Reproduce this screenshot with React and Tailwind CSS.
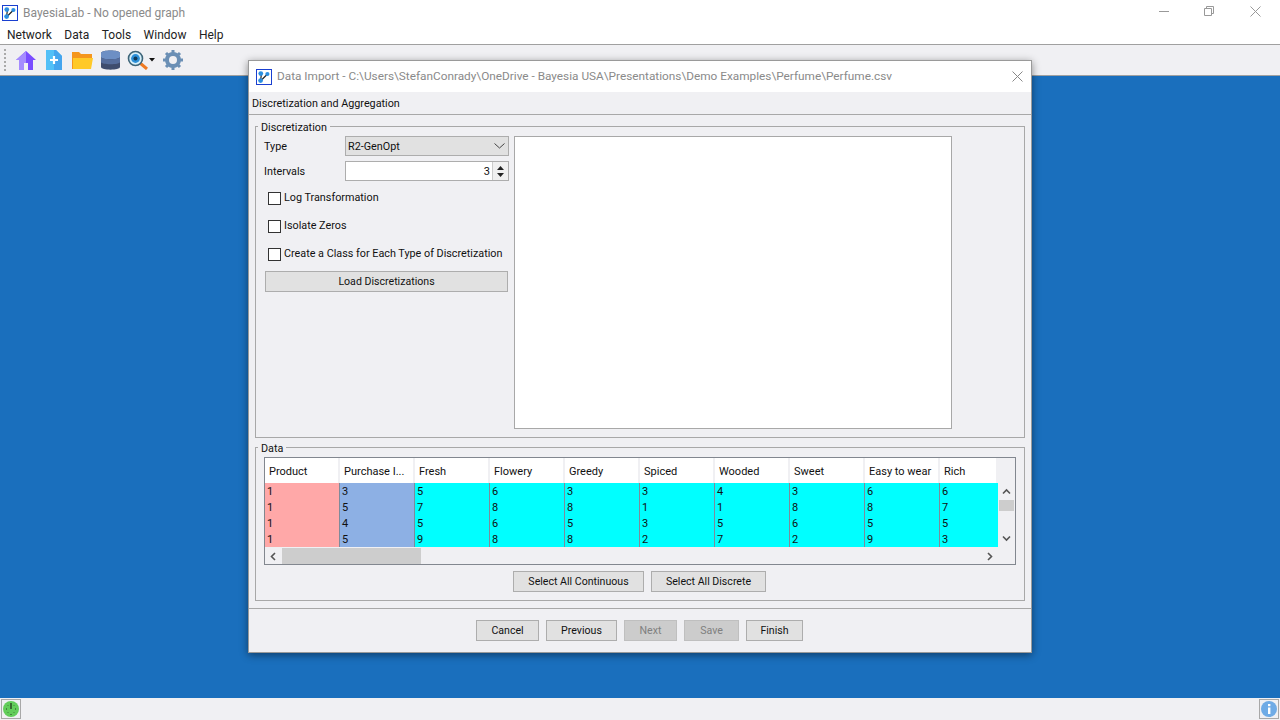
import React from "react";

const Logo = ({ s = 16 }) => (
  <svg width={s} height={s} viewBox="0 0 16 16" className="shrink-0">
    <rect x="0.5" y="0.5" width="15" height="15" fill="#fff" stroke="#1a3fd0" />
    <path d="M4.5 12 L5.5 4.5 M4.5 12 L11.5 5" stroke="#222" strokeWidth="1.2" />
    <circle cx="4.8" cy="4.6" r="2.4" fill="#2b8fe0" />
    <circle cx="11.4" cy="5" r="2.1" fill="#2b8fe0" />
    <circle cx="4.6" cy="11.6" r="2.4" fill="#2b8fe0" />
  </svg>
);

const Btn = ({ children, w, disabled }) => (
  <div
    className={`h-[21px] shrink-0 flex items-center justify-center border text-[10.6px] ${w} ${disabled ? "bg-[#cccccc] text-[#7f7f7f] border-[#bfbfbf]" : "bg-[#e1e1e1] text-[#111] border-[#adadad]"}`}
  >
    <span className="mt-[1px]">{children}</span>
  </div>
);

const Check = ({ label, mt }) => (
  <div className={`flex items-center h-[14px] pl-[4px] ${mt}`}>
    <div className="w-[13px] h-[13px] shrink-0 border border-[#333] bg-white mr-[3px]" />
    <span className="text-[10.8px] text-[#111] whitespace-nowrap">{label}</span>
  </div>
);

const cols = [
  { name: "Product", bg: "bg-[#ffa8a8]", v: [1, 1, 1, 1], w: "w-[75px]", sep: "border-r border-[#7f8a9a]" },
  { name: "Purchase I...", bg: "bg-[#8db0e4]", v: [3, 5, 4, 5], w: "w-[75px]", sep: "border-r border-[#7f8a9a]" },
  { name: "Fresh", bg: "bg-[#00ffff]", v: [5, 7, 5, 9], w: "w-[75px]", sep: "border-r border-[#7f8a9a]" },
  { name: "Flowery", bg: "bg-[#00ffff]", v: [6, 8, 6, 8], w: "w-[75px]", sep: "border-r border-[#7f8a9a]" },
  { name: "Greedy", bg: "bg-[#00ffff]", v: [3, 8, 5, 8], w: "w-[75px]", sep: "border-r border-[#7f8a9a]" },
  { name: "Spiced", bg: "bg-[#00ffff]", v: [3, 1, 3, 2], w: "w-[75px]", sep: "border-r border-[#7f8a9a]" },
  { name: "Wooded", bg: "bg-[#00ffff]", v: [4, 1, 5, 7], w: "w-[75px]", sep: "border-r border-[#7f8a9a]" },
  { name: "Sweet", bg: "bg-[#00ffff]", v: [3, 8, 6, 2], w: "w-[75px]", sep: "border-r border-[#7f8a9a]" },
  { name: "Easy to wear", bg: "bg-[#00ffff]", v: [6, 8, 5, 9], w: "w-[75px]", sep: "border-r border-[#7f8a9a]" },
  { name: "Rich", bg: "bg-[#00ffff]", v: [6, 7, 5, 3], w: "w-[58px]", sep: "" },
];

const Chevron = ({ d }) => (
  <svg width="9" height="9" viewBox="0 0 9 9" className="shrink-0">
    <path d={d} fill="none" stroke="#555" strokeWidth="1.6" />
  </svg>
);

export default function App() {
  return (
    <div
      className="relative w-[1280px] h-[720px] overflow-hidden flex flex-col bg-[#1a6fbd] text-[#111]"
      style={{ fontFamily: 'Roboto, "Noto Sans", sans-serif' }}
    >
      {/* App title + menu */}
      <div className="h-[45px] bg-white border-b border-[#a0a0a0] shrink-0">
        <div className="h-[23px] flex items-center pl-[2px] pt-[2px]">
          <Logo />
          <span className="ml-[5px] text-[12px] text-[#8a8a8a]">BayesiaLab - No opened graph</span>
          <div className="ml-auto flex items-center mr-[19px] gap-[35px] pb-[3px]">
            <svg width="10" height="10" viewBox="0 0 10 10"><path d="M0 5.5H10" stroke="#999" /></svg>
            <svg width="10" height="10" viewBox="0 0 10 10" className="mr-[1px]"><path d="M2.5 2.5V0.5H9.5V7.5H7.5M0.5 2.5H7.5V9.5H0.5Z" fill="none" stroke="#999" /></svg>
            <svg width="11" height="11" viewBox="0 0 11 11"><path d="M0.5 0.5L10.5 10.5M10.5 0.5L0.5 10.5" stroke="#999" /></svg>
          </div>
        </div>
        <div className="h-[21px] flex items-center pl-[7px] pt-[2px] gap-[12.5px] text-[12px] text-[#222]">
          <span>Network</span>
          <span>Data</span>
          <span>Tools</span>
          <span>Window</span>
          <span>Help</span>
        </div>
      </div>

      {/* Toolbar */}
      <div className="h-[31px] bg-[#f0f0f3] border-b border-[#a0a0a0] shrink-0 flex items-center pl-[4px]">
        <div className="w-[3px] h-[22px] border-l-2 border-dotted border-[#aaa] mr-[9px]" />
        <svg width="20" height="20" viewBox="0 0 20 20" className="mr-[10px]">
          <path d="M10 1L0 10H3V20H8V13H12V20H17V10H20Z" fill="#7a4dff" />
          <path d="M10 1L0 10H3V20H8V13H10Z" fill="#a58cff" />
        </svg>
        <svg width="16" height="20" viewBox="0 0 16 20" className="mr-[10px]">
          <path d="M0 0H10L16 6V20H0Z" fill="#52c0f7" />
          <path d="M8 0H10L16 6V20H8Z" fill="#45a5ee" />
          <path d="M8 6V14M4 10H12" stroke="#fff" strokeWidth="2.2" />
        </svg>
        <svg width="21" height="19" viewBox="0 0 21 19" className="mr-[8px]">
          <path d="M0 1H7L9 3H20V8H0Z" fill="#f5961d" />
          <path d="M0 1H2V18H0Z" fill="#f5961d" />
          <path d="M1 7H21L19 18H1Z" fill="#ffc928" />
        </svg>
        <svg width="19" height="20" viewBox="0 0 19 20" className="mr-[7px]">
          <path d="M0 3C0 -0.5 19 -0.5 19 3V17C19 20.5 0 20.5 0 17Z" fill="#3f4d6e" />
          <path d="M0 3C0 -0.5 19 -0.5 19 3V7C19 10 0 10 0 7Z" fill="#6d8fc4" />
          <path d="M0 7C0 10 19 10 19 7V12C19 15 0 15 0 12Z" fill="#556d9c" />
        </svg>
        <svg width="22" height="20" viewBox="0 0 22 20">
          <path d="M13 13L20 19" stroke="#ef7a22" strokeWidth="3" />
          <circle cx="8.5" cy="8.5" r="7" fill="#d5effa" stroke="#3d6478" strokeWidth="1.6" />
          <circle cx="8.5" cy="8.5" r="4.4" fill="#2b8fd8" />
          <circle cx="8.5" cy="8.5" r="2" fill="#123a56" />
        </svg>
        <svg width="6" height="4" viewBox="0 0 6 4" className="mr-[8px]">
          <path d="M0 0H6L3 3.5Z" fill="#111" />
        </svg>
        <svg width="20" height="20" viewBox="0 0 20 20">
          <circle cx="10" cy="10" r="6" fill="none" stroke="#6b8fb5" strokeWidth="4" />
          <path d="M10 0V4M10 16V20M0 10H4M16 10H20M3 3L5.8 5.8M14.2 14.2L17 17M17 3L14.2 5.8M5.8 14.2L3 17" stroke="#6b8fb5" strokeWidth="3" />
        </svg>
      </div>

      <div className="flex-1" />

      {/* Status bar */}
      <div className="h-[22px] bg-[#f0f0f3] shrink-0 flex items-center justify-between px-[1px]">
        <div className="w-[20px] h-[20px] border border-[#a8a8a8] flex items-center justify-center">
          <svg width="16" height="16" viewBox="0 0 16 16">
            <circle cx="8" cy="8" r="8" fill="#62cd5a" />
            <path d="M8 2V8" stroke="#26401f" strokeWidth="1.4" />
            <path d="M3 8H4M12 8H13M8 13V14M4.5 12L5 11.5M11.5 12L11 11.5M4.5 4L5 4.5M11.5 4L11 4.5" stroke="#26401f" />
          </svg>
        </div>
        <div className="w-[20px] h-[20px] border border-[#a8a8a8] flex items-center justify-center">
          <svg width="16" height="16" viewBox="0 0 16 16">
            <circle cx="8" cy="8" r="8" fill="#6fabe6" />
            <rect x="7" y="6.5" width="2.4" height="6.5" fill="#fff" />
            <rect x="7" y="3" width="2.4" height="2.2" fill="#fff" />
          </svg>
        </div>
      </div>

      {/* Dialog window */}
      <div className="absolute left-[248px] top-[60px] w-[784px] h-[593px] bg-[#f0f0f3] border border-[#9a9a9a] shadow-[0_2px_8px_rgba(0,0,0,0.45)] flex flex-col">
        <div className="h-[31px] bg-white flex items-center pl-[7px] pr-[8px] shrink-0">
          <Logo />
          <span className="ml-[5px] mt-[1px] text-[11.8px] text-[#8a8a8a] whitespace-nowrap">
            Data Import - C:\Users\StefanConrady\OneDrive - Bayesia USA\Presentations\Demo Examples\Perfume\Perfume.csv
          </span>
          <svg width="11" height="11" viewBox="0 0 11 11" className="ml-auto">
            <path d="M0.5 0.5L10.5 10.5M10.5 0.5L0.5 10.5" stroke="#888" />
          </svg>
        </div>
        <div className="h-[23px] flex items-center pl-[3px] pt-[2px] border-b border-[#a8a8a8] text-[10.8px] shrink-0">
          Discretization and Aggregation
        </div>

        <div className="flex-1 px-[6px] flex flex-col">
          {/* Discretization */}
          <fieldset className="mt-[4px] h-[319px] border border-[#a8a8a8] pl-[8px] pr-[71px] flex gap-[5px]">
            <legend className="-ml-[6px] px-[3px] h-[15px] pt-[1px] text-[10.8px] leading-[15px]">Discretization</legend>
            <div className="w-[245px] pt-[2px] flex flex-col">
              <div className="flex items-center">
                <span className="w-[81px] mt-[2px] text-[10.8px]">Type</span>
                <div className="w-[164px] h-[20px] border border-[#adadad] bg-[#e1e1e1] flex items-center justify-between pl-[2px] pr-[3px]">
                  <span className="mt-[2px] text-[10.8px]">R2-GenOpt</span>
                  <svg width="11" height="6" viewBox="0 0 11 6"><path d="M0.5 0.5L5.5 5L10.5 0.5" fill="none" stroke="#444" /></svg>
                </div>
              </div>
              <div className="flex items-center mt-[5px]">
                <span className="w-[81px] mt-[2px] text-[10.8px]">Intervals</span>
                <div className="w-[164px] h-[20px] border border-[#adadad] bg-white flex items-center justify-end">
                  <span className="mt-[2px] text-[11px] mr-[2px]">3</span>
                  <div className="w-[16px] h-[18px] bg-[#f0f0f0] border-l border-[#ccc] flex flex-col items-center justify-center gap-[3px]">
                    <svg width="7" height="4" viewBox="0 0 7 4"><path d="M3.5 0L7 4H0Z" fill="#222" /></svg>
                    <svg width="7" height="4" viewBox="0 0 7 4"><path d="M0 0H7L3.5 4Z" fill="#222" /></svg>
                  </div>
                </div>
              </div>
              <Check label="Log Transformation" mt="mt-[10px]" />
              <Check label="Isolate Zeros" mt="mt-[14px]" />
              <Check label="Create a Class for Each Type of Discretization" mt="mt-[14px]" />
              <Btn w="w-[243px] ml-[1px] mt-[10px]">Load Discretizations</Btn>
            </div>
            <div className="w-[438px] h-[293px] mt-[2px] bg-white border border-[#a8a8a8]" />
          </fieldset>

          {/* Data */}
          <fieldset className="mt-[2px] h-[161px] border border-[#a8a8a8] pl-[8px] pr-[7px] flex flex-col">
            <legend className="-ml-[6px] px-[3px] h-[15px] pt-[1px] text-[10.8px] leading-[15px]">Data</legend>
            <div className="h-[108px] w-[752px] mt-[2px] border border-[#82878f] bg-[#f0f0f3] flex flex-col shrink-0">
              <div className="flex h-[90px]">
                <div className="w-[733px] flex">
                  {cols.map((c) => (
                    <div key={c.name} className={`${c.w} flex flex-col`}>
                      <div className="h-[25px] bg-white border-r-2 border-[#f0f0f3] flex items-center pl-[4px] pt-[4px] text-[11px] whitespace-nowrap overflow-hidden">
                        {c.name}
                      </div>
                      <div className={`h-[64px] ${c.bg} ${c.sep} flex flex-col`}>
                        {c.v.map((n, i) => (
                          <div key={i} className="h-[16px] pl-[2px] text-[11px] leading-[18px]">{n}</div>
                        ))}
                      </div>
                    </div>
                  ))}
                </div>
                <div className="w-[17px] pt-[25px] flex flex-col items-center">
                  <div className="h-[17px] flex items-center"><Chevron d="M1 6.5L4.5 3L8 6.5" /></div>
                  <div className="w-[15px] h-[11px] bg-[#cdcdcd] shrink-0" />
                  <div className="h-[19px]" />
                  <div className="h-[16px] flex items-center"><Chevron d="M1 2.5L4.5 6L8 2.5" /></div>
                </div>
              </div>
              <div className="h-[16px] flex items-center">
                <div className="w-[17px] flex justify-center"><Chevron d="M6 1L2.5 4.5L6 8" /></div>
                <div className="w-[139px] h-[16px] bg-[#cdcdcd]" />
                <div className="w-[560px]" />
                <div className="w-[17px] flex justify-center"><Chevron d="M3 1L6.5 4.5L3 8" /></div>
              </div>
            </div>
            <div className="flex justify-center gap-[7px] mt-[6px] -ml-[2px]">
              <Btn w="w-[131px]">Select All Continuous</Btn>
              <Btn w="w-[115px]">Select All Discrete</Btn>
            </div>
          </fieldset>
        </div>

        {/* Footer */}
        <div className="h-[44px] border-t border-[#a8a8a8] shrink-0 flex justify-center gap-[7px] pt-[11px] pr-[1px]">
          <Btn w="w-[63px]">Cancel</Btn>
          <Btn w="w-[71px]">Previous</Btn>
          <Btn w="w-[53px]" disabled>Next</Btn>
          <Btn w="w-[55px]" disabled>Save</Btn>
          <Btn w="w-[57px]">Finish</Btn>
        </div>
      </div>
    </div>
  );
}
